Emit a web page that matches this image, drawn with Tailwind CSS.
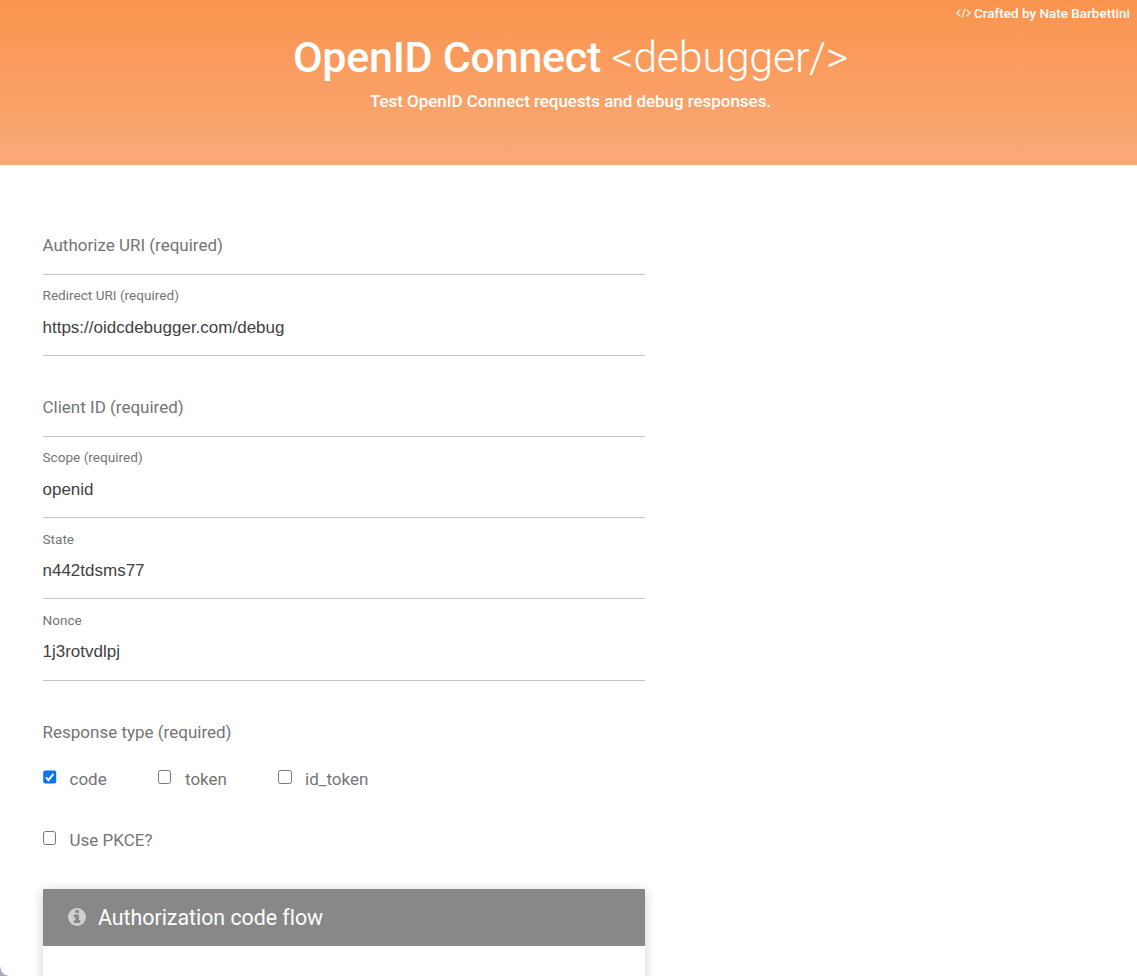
<!DOCTYPE html>
<html lang="en">
<head>
<meta charset="utf-8">
<title>OpenID Connect debugger</title>
<script src="https://cdn.jsdelivr.net/npm/@tailwindcss/browser@4"></script>
</head>
<body class="relative h-[976px] overflow-hidden bg-white font-['Roboto',sans-serif] text-[17px] text-[#757575]">
<header class="relative flex h-[165px] flex-col items-center bg-linear-to-b from-[#f9944d] to-[#faa977] pl-1 text-white">
  <a class="absolute top-[5px] right-[7px] flex items-center gap-[3px] text-[13.5px] leading-4 font-medium tracking-[-0.01px] whitespace-nowrap">
    <svg class="h-[10px] w-[15px]" viewBox="0 0 15 10" fill="none" stroke="currentColor" stroke-width="1.1"><path d="M4.5 1.6.9 5l3.6 3.4M10.5 1.6 14.1 5l-3.6 3.4M8.9.6 6.1 9.4"/></svg>
    <span>Crafted by Nate Barbettini</span>
  </a>
  <h1 class="mt-[32px] text-[43px] leading-[50px] font-medium tracking-[-0.27px] whitespace-nowrap">OpenID Connect <span class="font-light">&lt;debugger/&gt;</span></h1>
  <p class="mt-[9px] text-[17px] leading-5 font-medium tracking-[-0.04px] whitespace-nowrap">Test OpenID Connect requests and debug responses.</p>
</header>
<main class="ml-[43px] w-[602px] pt-[29px]">
  <div class="h-[81px] border-b border-[#c4c4c4] pt-[41px] leading-5"><span class="-ml-[0.5px]">Authorize URI (required)</span></div>
  <div class="h-[81px] border-b border-[#c4c4c4] pt-[12px]">
    <label class="-ml-[0.5px] block text-[13.6px] leading-4">Redirect URI (required)</label>
    <div class="-ml-[0.5px] mt-[15px] font-['Liberation_Sans',sans-serif] text-[17px] leading-5 text-[#424242]">https://oidcdebugger.com/debug</div>
  </div>
  <div class="h-[81px] border-b border-[#c4c4c4] pt-[41px] leading-5"><span class="-ml-[0.5px]">Client ID (required)</span></div>
  <div class="h-[81px] border-b border-[#c4c4c4] pt-[12px]">
    <label class="-ml-[0.5px] block text-[13.6px] leading-4">Scope (required)</label>
    <div class="-ml-[0.5px] mt-[15px] font-['Liberation_Sans',sans-serif] text-[17px] leading-5 text-[#424242]">openid</div>
  </div>
  <div class="h-[81px] border-b border-[#c4c4c4] pt-[13px]">
    <label class="-ml-[0.5px] block text-[13.6px] leading-4">State</label>
    <div class="-ml-[0.5px] mt-[14px] font-['Liberation_Sans',sans-serif] text-[17px] leading-5 text-[#424242]">n442tdsms77</div>
  </div>
  <div class="h-[82px] border-b border-[#c4c4c4] pt-[13px]">
    <label class="-ml-[0.5px] block text-[13.6px] leading-4">Nonce</label>
    <div class="-ml-[0.5px] mt-[14px] font-['Liberation_Sans',sans-serif] text-[17px] leading-5 text-[#424242]">1j3rotvdlpj</div>
  </div>
  <div class="-ml-[0.5px] mt-[41px] leading-5">Response type (required)</div>
  <div class="mt-[27px] flex h-5 leading-5">
    <label class="flex w-[115px] gap-[12.5px]"><svg class="mt-px size-[14px]" viewBox="0 0 14 14"><rect x=".2" y=".4" width="13" height="13.2" rx="2" fill="#0b75f0"/><path d="m3 7.3 2.5 2.8 4.9-6.3" fill="none" stroke="#fff" stroke-width="2"/></svg>code</label>
    <label class="flex w-[120px] gap-[14px]"><span class="mt-px h-[14px] w-[13px] rounded-[2.5px] border border-[#767676] bg-white"></span>token</label>
    <label class="flex gap-[13px]"><span class="mt-px size-[14px] rounded-[2.5px] border border-[#767676] bg-white"></span>id_token</label>
  </div>
  <label class="mt-[41px] flex h-5 gap-[13.5px] leading-5"><span class="mt-px h-[14px] w-[13px] rounded-[2.5px] border border-[#767676] bg-white"></span>Use PKCE?</label>
  <section class="mt-[39px] h-[120px] bg-white shadow-[0_2px_10px_rgba(0,0,0,0.2)]">
    <h2 class="flex h-[57px] items-center gap-[12px] bg-[#888888] pl-[25px] text-[21.4px] tracking-[-0.03px] text-white">
      <svg class="mb-px size-[18px]" viewBox="0 0 18 18"><circle cx="9" cy="9" r="9" fill="#d0d0d0"/><path d="M7.4 2.1h3.5v3H7.4zM5.8 6.6h5.1v5.7h1.4V15H5.8v-2.7h1.6V9.2H5.8z" fill="#888888"/></svg>
      <span class="pt-px">Authorization code flow</span>
    </h2>
  </section>
</main>
<svg class="absolute bottom-0 left-0 size-[10px]" viewBox="0 0 10 10"><path d="M0 0Q1 9 9 10H0Z" fill="#a3abb5"/></svg>
</body>
</html>
